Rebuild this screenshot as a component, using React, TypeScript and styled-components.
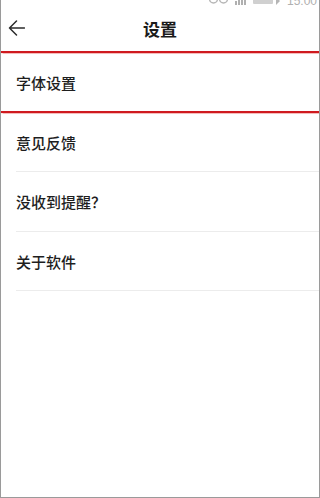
import React from "react";
import styled, { createGlobalStyle } from "styled-components";

const Global = createGlobalStyle`
  html, body { margin: 0; padding: 0; background: #fff; }
  * { box-sizing: border-box; }
`;

const Frame = styled.div`
  width: 320px;
  height: 498px;
  border-left: 1px solid #9a9a9a;
  border-right: 1px solid #9a9a9a;
  border-bottom: 1px solid #9a9a9a;
  background: #fff;
  display: flex;
  flex-direction: column;
  overflow: hidden;
  font-family: "Noto Sans CJK SC", "Noto Sans", sans-serif;
`;

const StatusBar = styled.div`
  height: 5px;
  overflow: hidden;
  display: flex;
  align-items: flex-end;
  justify-content: flex-end;
  gap: 6px;
  padding-right: 2px;
  flex-shrink: 0;
`;

const StatusTime = styled.span`
  font-family: "Liberation Sans", sans-serif;
  font-size: 12px;
  line-height: 12px;
  height: 12px;
  margin-bottom: -2px;
  color: #b0b0b0;
`;

const Header = styled.header`
  height: 46px;
  display: grid;
  grid-template-columns: 48px 1fr 48px;
  align-items: center;
  flex-shrink: 0;
`;

const BackButton = styled.button`
  border: 0;
  background: none;
  padding: 0 0 0 7px;
  display: flex;
  align-items: center;
  height: 100%;
  cursor: pointer;
`;

const Title = styled.h1`
  margin: 0;
  text-align: center;
  font-size: 17px;
  font-weight: 700;
  color: #1a1a1a;
`;

const RedRule = styled.div`
  height: 2px;
  background: #cf1a1f;
  box-shadow: 0 0 1px 0.5px rgba(230, 60, 60, 0.35);
  flex-shrink: 0;
`;

const Row = styled.div<{ $h: number }>`
  height: ${(p) => p.$h}px;
  display: flex;
  align-items: center;
  padding-left: 15px;
  font-size: 15px;
  font-weight: 500;
  color: #1e1e1e;
  flex-shrink: 0;
`;

const Divider = styled.div`
  height: 1px;
  margin-left: 15px;
  background: #ececec;
  flex-shrink: 0;
`;

const Icon = styled.svg`
  display: block;
  flex-shrink: 0;
`;

export default function App() {
  return (
    <>
      <Global />
      <Frame>
        <StatusBar>
          <Icon width="20" height="12" viewBox="0 0 20 12">
            <circle cx="4.5" cy="6" r="4" fill="none" stroke="#b8b8b8" strokeWidth="1.4" />
            <circle cx="14.5" cy="6" r="4" fill="none" stroke="#b8b8b8" strokeWidth="1.4" />
          </Icon>
          <Icon width="12" height="12" viewBox="0 0 12 12">
            <rect x="0" y="8" width="2" height="4" fill="#b0b0b0" />
            <rect x="3" y="6" width="2" height="6" fill="#b0b0b0" />
            <rect x="6" y="3" width="2" height="9" fill="#b0b0b0" />
            <rect x="9" y="0" width="2" height="12" fill="#b0b0b0" />
          </Icon>
          <Icon width="28" height="12" viewBox="0 0 28 12">
            <rect x="0" y="3" width="20" height="8" rx="1" fill="#d0d0d0" />
            <path d="M23 4 L27 8 L23 12 Z" fill="#b5b5b5" />
          </Icon>
          <StatusTime>15:00</StatusTime>
        </StatusBar>
        <Header>
          <BackButton aria-label="返回">
            <Icon width="17" height="16" viewBox="0 0 17 16">
              <path
                d="M16.5 8 H1.5 M8.5 1 L1.5 8 L8.5 15"
                fill="none"
                stroke="#2b2b2b"
                strokeWidth="1.5"
                strokeLinecap="round"
                strokeLinejoin="round"
              />
            </Icon>
          </BackButton>
          <Title>设置</Title>
          <span />
        </Header>
        <RedRule />
        <Row $h={58}>字体设置</Row>
        <RedRule />
        <Row $h={58}>意见反馈</Row>
        <Divider />
        <Row $h={59}>没收到提醒？</Row>
        <Divider />
        <Row $h={58}>关于软件</Row>
        <Divider />
      </Frame>
    </>
  );
}
